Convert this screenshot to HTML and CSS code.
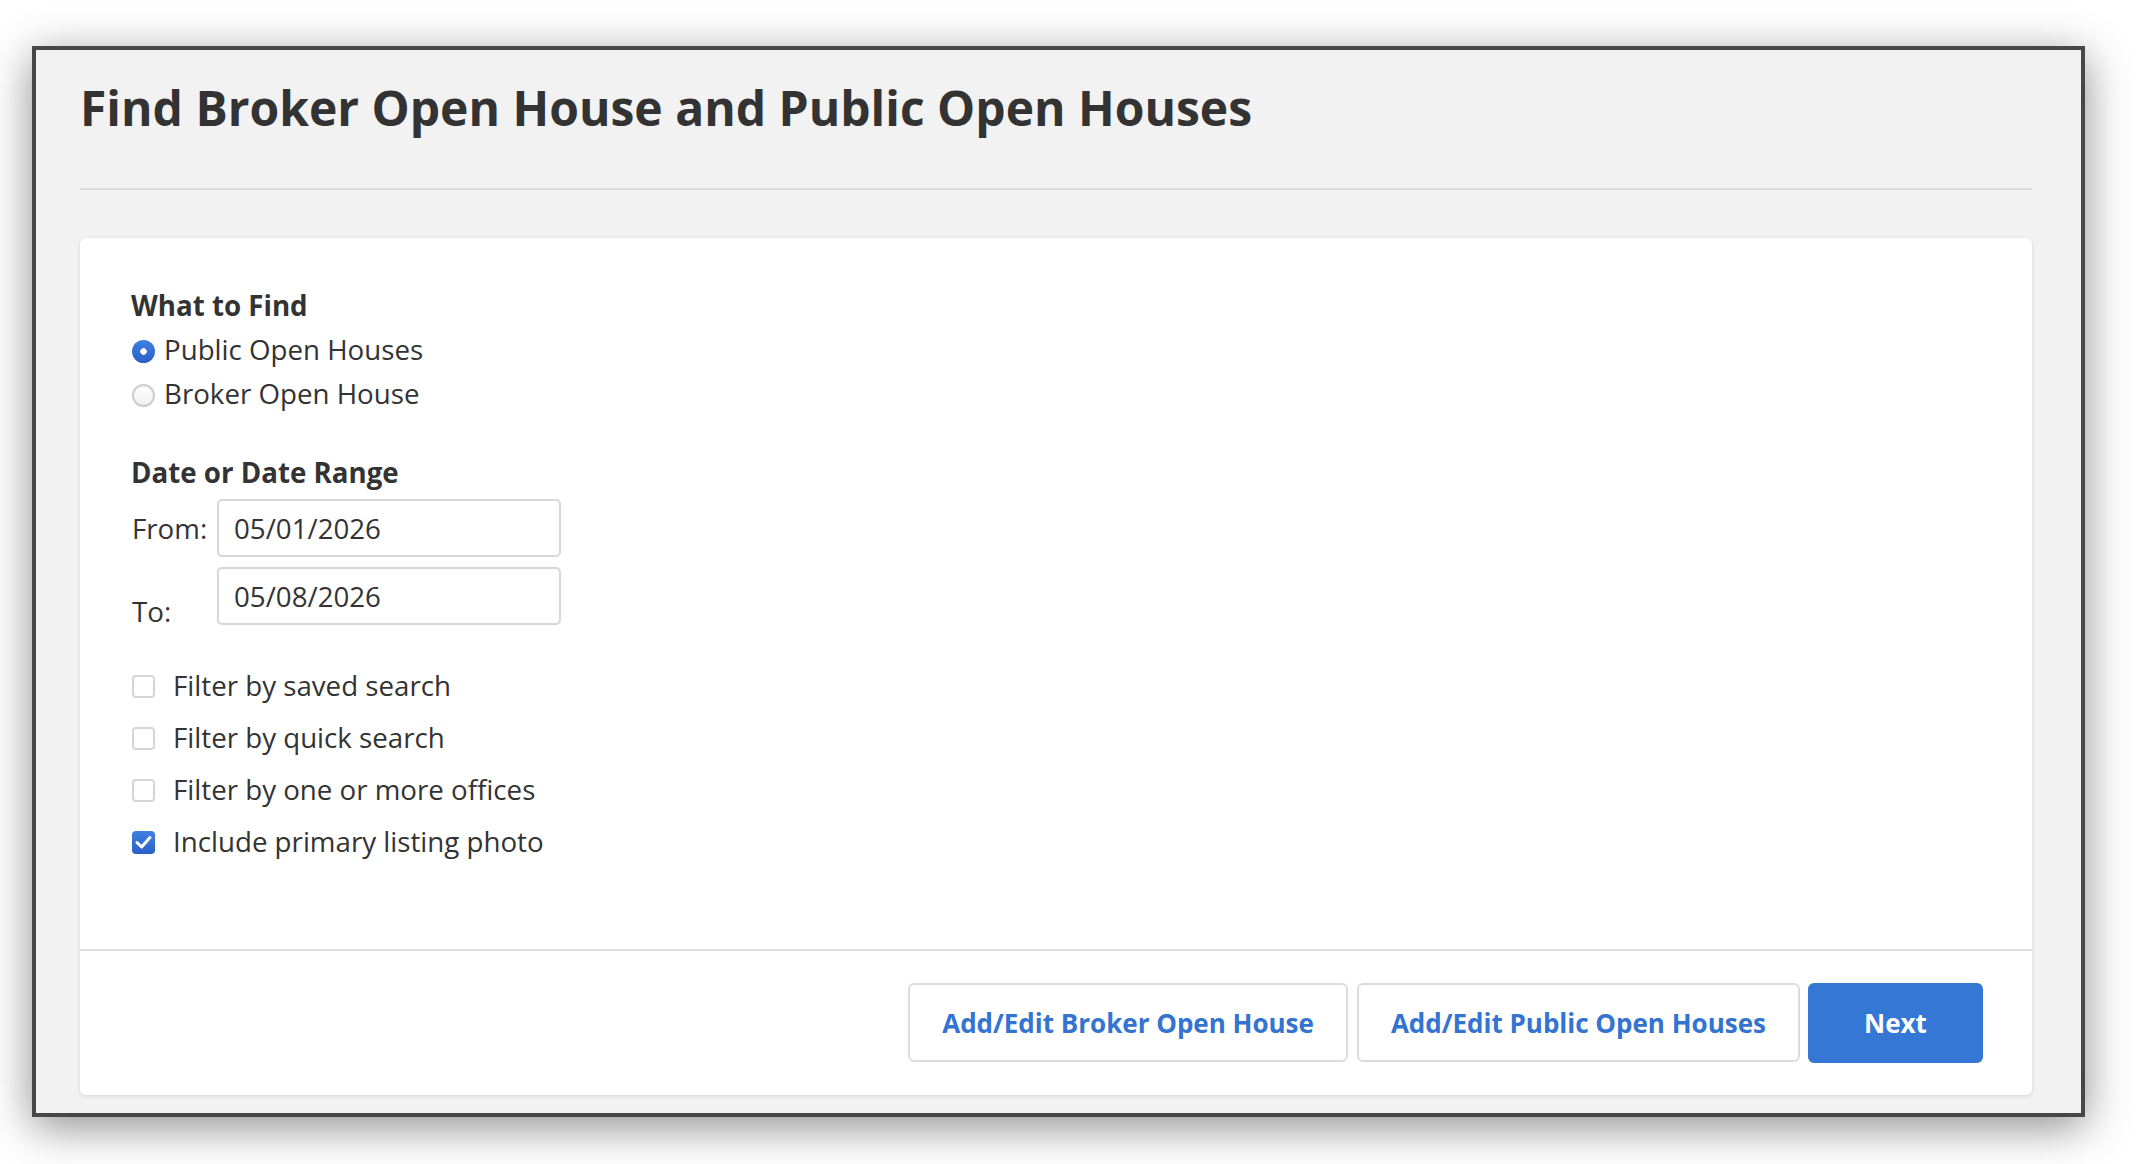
FILE: index.html
```html
<!DOCTYPE html>
<html lang="en">
<head>
<meta charset="utf-8">
<title>Find Broker Open House and Public Open Houses</title>
<link rel="stylesheet" href="styles.css">
</head>
<body>
<div class="frame">
  <header class="page-header">
    <h1 class="title">Find Broker Open House and Public Open Houses</h1>
  </header>
  <section class="card">
    <div class="card-body">
      <div class="group-title">What to Find</div>
      <div class="radio-row"><span class="radio radio-on"></span><span class="row-text">Public Open Houses</span></div>
      <div class="radio-row"><span class="radio"></span><span class="row-text">Broker Open House</span></div>

      <div class="group-title date-title">Date or Date Range</div>
      <div class="date-grid">
        <div class="date-label">From:</div>
        <div class="date-input">05/01/2026</div>
        <div class="date-label date-label-to">To:</div>
        <div class="date-input">05/08/2026</div>
      </div>

      <div class="checks">
        <div class="check-row"><span class="check"></span><span class="row-text">Filter by saved search</span></div>
        <div class="check-row"><span class="check"></span><span class="row-text">Filter by quick search</span></div>
        <div class="check-row"><span class="check"></span><span class="row-text">Filter by one or more offices</span></div>
        <div class="check-row"><span class="check check-on"><svg viewBox="0 0 23 23" width="23" height="23"><path d="M5 11.5 L9.6 16 L18 6.6" fill="none" stroke="#fff" stroke-width="3" stroke-linecap="round" stroke-linejoin="round"/></svg></span><span class="row-text">Include primary listing photo</span></div>
      </div>
    </div>
    <div class="card-footer">
      <button class="btn btn-first">Add/Edit Broker Open House</button>
      <button class="btn">Add/Edit Public Open Houses</button>
      <button class="btn btn-primary">Next</button>
    </div>
  </section>
</div>
</body>
</html>
```

FILE: styles.css
```css
html, body {
  margin: 0;
  padding: 0;
  background: #ffffff;
}

body {
  font-family: "Open Sans", "Liberation Sans", sans-serif;
  color: #333333;
  width: 2146px;
  height: 1164px;
  overflow: hidden;
}

.frame {
  box-sizing: border-box;
  margin: 46px 0 0 32px;
  width: 2053px;
  height: 1071px;
  border: 4px solid #474747;
  background: #f2f2f2;
  padding: 0 49px 0 44px;
  box-shadow: 0 10px 42px rgba(0, 0, 0, 0.45);
  display: flex;
  flex-direction: column;
}

.page-header {
  padding-top: 24px;
  padding-bottom: 47px;
  border-bottom: 2px solid #dcdcdc;
}

.title {
  margin: 0;
  font-size: 48px;
  line-height: 67px;
  font-weight: 700;
  color: #333333;
}

.card {
  margin-top: 48px;
  background: #ffffff;
  border-radius: 6px;
  box-shadow: 0 1px 4px rgba(0, 0, 0, 0.13);
  display: flex;
  flex-direction: column;
}

.card-body {
  padding: 49px 52px 82px 51px;
  font-size: 27.7px;
}

.group-title {
  font-weight: 700;
  line-height: 37px;
  margin-bottom: 3px;
}

.date-title {
  margin-top: 39px;
  margin-bottom: 8px;
}

.radio-row {
  display: flex;
  align-items: center;
  height: 44px;
  line-height: 44px;
}

.radio {
  box-sizing: border-box;
  width: 23px;
  height: 23px;
  border-radius: 50%;
  margin: 4px 9px 0 1px;
  border: 2px solid #cdcdcd;
  background: linear-gradient(#ffffff, #f1f1f1);
  box-shadow: inset 0 1px 1px rgba(0, 0, 0, 0.04);
  flex: none;
}

.radio-on {
  border: none;
  box-shadow: none;
  background:
    radial-gradient(circle at center, #ffffff 0 3px, rgba(255,255,255,0) 3.6px),
    linear-gradient(#3f80e2, #2a60c6);
}

.date-grid {
  display: grid;
  grid-template-columns: 86px 344px;
  row-gap: 10px;
}

.date-label {
  align-self: center;
  line-height: 37px;
  padding-left: 1px;
}

.date-label-to {
  align-self: start;
  padding-top: 26px;
}

.date-input {
  box-sizing: border-box;
  height: 58px;
  border: 2px solid #d7d7d7;
  border-radius: 5px;
  padding-left: 15px;
  display: flex;
  align-items: center;
  background: #ffffff;
}

.checks {
  margin-top: 29px;
}

.check-row {
  display: flex;
  align-items: center;
  height: 52px;
  line-height: 52px;
}

.check {
  box-sizing: border-box;
  width: 23px;
  height: 23px;
  border: 2px solid #d6d6d6;
  border-radius: 4px;
  background: #ffffff;
  margin: 3px 18px 0 1px;
  flex: none;
  display: flex;
}

.check-on {
  border: none;
  background: linear-gradient(#3f80e2, #2a60c6);
}

.check svg {
  display: block;
}

.card-footer {
  border-top: 2px solid #dedede;
  padding: 32px 49px 32px 0;
  display: flex;
  justify-content: flex-end;
  gap: 8px;
}

.btn {
  box-sizing: border-box;
  height: 79px;
  padding: 0 32px;
  border: 2px solid #dcdcdc;
  border-radius: 6px;
  background: #ffffff;
  color: #3373d2;
  font-family: "Open Sans", "Liberation Sans", sans-serif;
  font-size: 26px;
  font-weight: 700;
  cursor: pointer;
}

.btn-first {
  margin-right: 1px;
}

.btn-primary {
  height: 80px;
  width: 175px;
  padding: 0;
  border-color: #3577d4;
  background: #3577d4;
  color: #ffffff;
}
```
